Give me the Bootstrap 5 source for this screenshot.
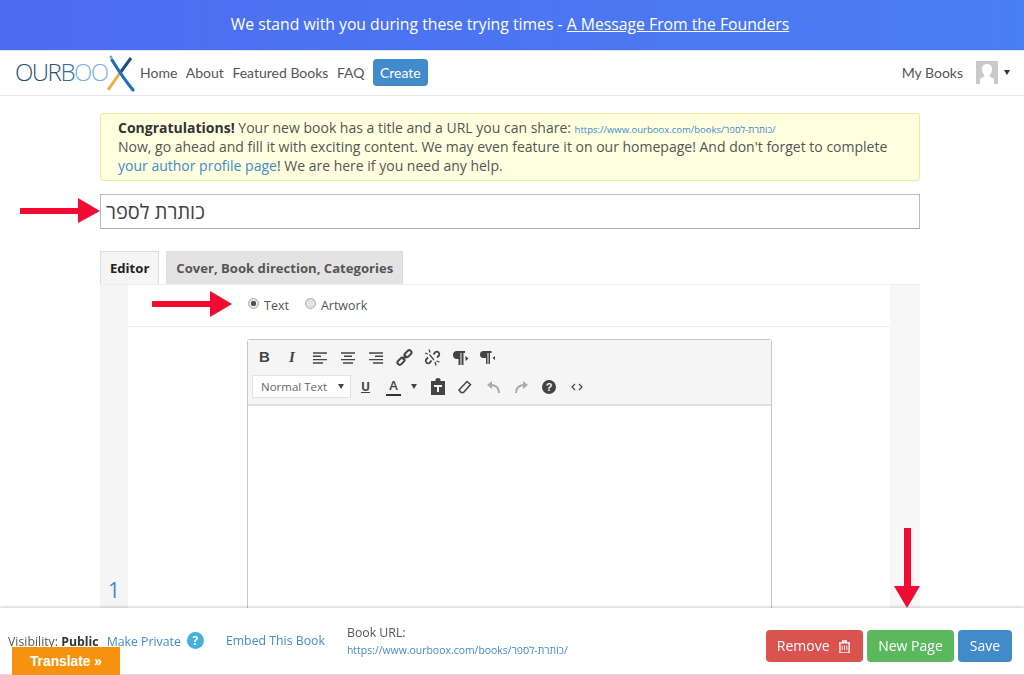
<!DOCTYPE html>
<html lang="en"><head><meta charset="utf-8"><title>Ourboox</title>
<link href="https://cdn.jsdelivr.net/npm/bootstrap@5.3.0/dist/css/bootstrap.min.css" rel="stylesheet">
<style>
html,body{height:675px;overflow:hidden}
body{font-family:"Open Sans","Noto Sans",sans-serif;color:#555;background:#fff;position:relative}
.top-banner{height:51px;background:linear-gradient(90deg,#4d6cf0,#4a7ef5);color:#fff;font-size:15.75px;border-bottom:1px solid #dfe6fb;padding-right:4px}
.top-banner a{color:#fff}
.site-nav{height:45px;border-bottom:1px solid #e7e7e7;padding:0 13px 1px 15px;font-family:Lato,sans-serif;font-size:14px}
.site-nav a{color:#555;text-decoration:none}
.logo-box{width:120px;height:44px;position:relative;margin-right:5px}
.logo-word{position:absolute;left:0;top:4px;font-family:"Open Sans",sans-serif;font-weight:300;font-size:24px;line-height:34px;letter-spacing:-1.5px;color:#1f4e79;white-space:nowrap}
.logo-word u{text-decoration:none;color:#2f6aa8}
.logo-word i{font-style:normal;color:#7fb0e0}
.logo-x{position:absolute;left:92px;top:3px}
.create-btn{background:#428bca;color:#fff!important;border-radius:4px;padding:0 7px;height:27px;line-height:27px}
.page-wrap{width:820px;margin:0 0 0 100px}
.note-box{margin-top:17px;height:68px;background:#ffffdf;border:1px solid #f0e9a0;border-radius:3px;padding:4px 17px;font-size:14px;line-height:19px;color:#555}
.note-box strong{color:#333}
.note-box a{color:#428bca;text-decoration:none}
.note-box .note-url{font-size:9.500px;line-height:1}
.title-field{margin-top:13px;height:35px;border:1px solid #bbb;border-bottom-color:#aaa;padding:0 5px;font-size:20px;line-height:33px;color:#444;font-family:"Noto Sans","Open Sans",sans-serif}
.tab-row{margin-top:22px;height:33px;gap:7px}
.tab-item{height:33px;border:1px solid #ddd;border-bottom:0;padding:0 9px;font-weight:700;font-size:13.100px;line-height:33px;background:#f5f5f5;color:#222}
.tab-off{background:#e3e3e3;color:#555}
.edit-frame{height:340px;border-top:1px solid #eee;background:#fff}
.gut-left{width:28px;background:#f5f5f5;position:relative}
.gut-right{width:30px;background:#f7f7f7}
.page-num{position:absolute;left:8px;top:291px;color:#428bca;font-size:21px;line-height:28px}
.mode-row{height:42px;border-bottom:1px solid #f0f0f0;font-size:12.500px;padding:2px 0 0 120px;color:#555}
.radio-dot{width:11px;height:11px;border-radius:50%;border:1px solid #aaa;background:#e4e4e4;display:inline-block;margin-right:5px;position:relative;top:-3px}
.radio-on{background:radial-gradient(circle,#555 0 2.500px,#e8e8e8 3px)}
.rich-box{margin:12px 0 0 119px;width:525px;height:300px;border:1px solid #c8c8c8;border-radius:3px 3px 0 0}
.rich-tools{height:66px;background:#f5f5f5;border-bottom:2px solid #e0e0e0;padding:3px 3px 0}
.tool-line{height:29px}
.tool-ic{width:29px;height:20px;display:flex;align-items:center;justify-content:center;flex:none}
.tool-sel{width:99px;height:23px;background:#fff;border:1px solid #e3e3e3;font-size:11.500px;color:#666;padding:0 6px 0 8px;margin:0 1px 0 1px}
.caret-mini{border-left:3.500px solid transparent;border-right:3.500px solid transparent;border-top:5px solid #444;display:inline-block}
.bottom-bar{position:fixed;left:0;right:0;top:608px;height:67px;background:#fff;box-shadow:0 -1px 3px rgba(0,0,0,.2);border-bottom:1px solid #ddd;font-size:12.300px;color:#555;padding:0 12px 0 8px}
.bottom-bar a{color:#428bca;text-decoration:none}
.help-dot{width:17px;height:17px;background:#46b0dc;color:#fff;border-radius:50%;font-weight:700;font-size:12px;line-height:17px;text-align:center;display:inline-block;margin-left:6px;position:relative;top:-1px}
.url-small{font-size:10.450px}
.act-btn{height:32px;border-radius:4px;color:#fff;font-size:14px;line-height:32px;text-align:center;border:0;padding:0}
.translate-tag{position:absolute;left:12px;top:39px;width:108px;height:28px;background:#f6920e;color:#fff;font-family:"Liberation Sans",sans-serif;font-weight:700;font-size:13.800px;line-height:29px;text-align:center}
.red-arrow{position:absolute;z-index:5}
.user-pic{width:22px;height:23px;background:#c9c9c9;margin:0 7px 0 13px;overflow:hidden}
</style></head>
<body>
<div class="top-banner d-flex align-items-center justify-content-center"><span>We stand with you during these trying times - <a href="#">A Message From the Founders</a></span></div>
<nav class="site-nav d-flex align-items-center">
  <div class="logo-box"><span class="logo-word">OUR<u>B</u><i>OO</i></span>
    <svg class="logo-x" width="30" height="40" viewBox="0 0 30 40"><circle cx="4" cy="3" r="1.500" fill="#6aa5de"/><path d="M1 36 13 19" stroke="#e9b23f" stroke-width="3" fill="none"/><path d="M13 19 24 4" stroke="#1f4f86" stroke-width="3" fill="none"/><path d="M5 6C10 14 16 24 26 36" stroke="#1d6fc0" stroke-width="3.200" fill="none" stroke-linecap="round"/></svg>
  </div>
  <div class="d-flex align-items-center" style="gap:8.500px"><a href="#">Home</a><a href="#">About</a><a href="#">Featured Books</a><a href="#">FAQ</a><a href="#" class="create-btn">Create</a></div>
  <div class="ms-auto d-flex align-items-center" style="margin-right:1px"><a href="#">My Books</a>
    <div class="user-pic" style="margin-right:6px"><svg class="d-block" width="22" height="23" viewBox="0 0 22 23"><path d="M11 3c4 0 5.500 3 5 6-.3 2.500-1.500 4-2.500 5.500 0 1.500 2.500 2 4.500 3.500v5H4v-5c2-1.500 4.500-2 4.500-3.500C7.500 13 6.300 11.500 6 9c-.5-3 1-6 5-6z" fill="#fff"/></svg></div><span class="caret-mini" style="border-top-color:#333"></span></div>
</nav>
<main class="page-wrap">
  <div class="note-box"><strong>Congratulations!</strong> Your new book has a title and a URL you can share: <a class="note-url" href="#">https://www.ourboox.com/books/כותרת-לספר/</a><br>Now, go ahead and fill it with exciting content. We may even feature it on our homepage! And don't forget to complete<br><a href="#">your author profile page</a>! We are here if you need any help.</div>
  <div class="title-field"><span class="d-block">כותרת לספר</span></div>
  <div class="tab-row d-flex"><div class="tab-item">Editor</div><div class="tab-item tab-off">Cover, Book direction, Categories</div></div>
  <div class="edit-frame d-flex">
    <div class="gut-left"><span class="page-num">1</span></div>
    <div class="flex-grow-1">
      <div class="mode-row d-flex align-items-center"><span class="radio-dot radio-on"></span><span>Text</span><span class="radio-dot ms-3"></span><span>Artwork</span></div>
      <div class="rich-box">
        <div class="rich-tools">
          <div class="tool-line d-flex align-items-center">
            <span class="tool-ic" style="width:27px;font-weight:700;font-size:15px;color:#444;font-family:'Liberation Sans',sans-serif">B</span>
            <span class="tool-ic" style="width:28px;font-style:italic;font-weight:700;font-size:15px;color:#444;font-family:'Liberation Serif',serif">I</span>
            <span class="tool-ic" style="width:28px"><svg width="14" height="12" viewBox="0 0 14 12"><path d="M0 1h14M0 4.300h8M0 7.600h14M0 11h10" stroke="#444" stroke-width="1.400"/></svg></span>
            <span class="tool-ic" style="width:28px"><svg width="14" height="12" viewBox="0 0 14 12"><path d="M0 1h14M3 4.300h8M0 7.600h14M2 11h10" stroke="#444" stroke-width="1.400"/></svg></span>
            <span class="tool-ic" style="width:28px"><svg width="14" height="12" viewBox="0 0 14 12"><path d="M0 1h14M6 4.300h8M0 7.600h14M4 11h10" stroke="#444" stroke-width="1.400"/></svg></span>
            <span class="tool-ic" style="width:28px"><svg width="17" height="17" viewBox="0 0 17 17" fill="none" stroke="#444" stroke-width="2"><rect x="8" y="2.500" width="8" height="4.500" rx="2.200" transform="rotate(-45 12 4.750)"/><rect x="1" y="10" width="8" height="4.500" rx="2.200" transform="rotate(-45 5 12.250)"/><path d="M6.500 10.500l4-4"/></svg></span>
            <span class="tool-ic" style="width:28px"><svg width="17" height="17" viewBox="0 0 17 17" fill="none" stroke="#444" stroke-width="1.800"><path d="M9.500 5.500 11.500 3a2.600 2.600 0 0 1 3.500 3.500L13 8.500"/><path d="M7.500 11.500 5.500 14A2.600 2.600 0 0 1 2 10.500L4 8.500"/><path d="M5.500 5.500 10 11" stroke-width="1.200"/><path d="M5 .5l1 3M1 4l3 1M12.500 12l3 1M11 13l1 3.500" stroke-width="1.300"/></svg></span>
            <span class="tool-ic" style="width:28px"><svg width="17" height="14" viewBox="0 0 17 14"><path d="M5 0h8v2h-1.500v12H9.500V2H8.500v12h-2V8H5a4 4 0 0 1 0-8z" fill="#444"/><path d="M13.500 5l3 2.500-3 2.500z" fill="#444"/></svg></span>
            <span class="tool-ic" style="width:27px"><svg width="15" height="13" viewBox="0 0 15 13"><path d="M3.500 0h8v2H10v11H8.500V2h-1v11H6V7H3.500a3.500 3.500 0 0 1 0-7z" fill="#444"/><path d="M15 5l-2.500 2 2.500 2z" fill="#444"/></svg></span>
          </div>
          <div class="tool-line d-flex align-items-center">
            <div class="tool-sel d-flex align-items-center justify-content-between"><span>Normal Text</span><span class="caret-mini"></span></div>
            <span class="tool-ic" style="width:27px;font-weight:700;font-size:12px;color:#444;text-decoration:underline">U</span>
            <span class="tool-ic" style="width:27px;margin-left:1px;font-weight:600;font-size:13px;color:#444;display:block;text-align:center;line-height:17px"><span style="border-bottom:2px solid #333;padding:0 3px">A</span></span>
            <span class="caret-mini" style="margin-left:4px"></span>
            <span class="tool-ic" style="width:33px;margin-left:4px"><svg width="16" height="17" viewBox="0 0 16 17"><path d="M1 3h4.500V1.500q0-1.500 2.500-1.500t2.500 1.500V3H15v14H1z" fill="#444"/><path d="M4 7h8v2H9v5H7V9H4z" fill="#f5f5f5"/></svg></span>
            <span class="tool-ic" style="width:22px"><svg width="14" height="14" viewBox="0 0 14 14" fill="none" stroke="#444" stroke-width="1.500"><path d="M9 1.500l3.500 3-7 8H3l-2-2.500z"/></svg></span>
            <span class="tool-ic" style="margin-left:2.500px"><svg width="15" height="15" viewBox="0 0 15 15" fill="none" stroke="#aaa" stroke-width="2"><path d="M13 14C13 9 10 6 4 6"/><path d="M1 6l5-4v8z" fill="#aaa" stroke="none"/></svg></span>
            <span class="tool-ic" style="width:27px"><svg width="15" height="15" viewBox="0 0 15 15" fill="none" stroke="#aaa" stroke-width="2"><path d="M2 14C2 9 5 6 11 6"/><path d="M14 6l-5-4v8z" fill="#aaa" stroke="none"/></svg></span>
            <span class="tool-ic" style="width:28px"><svg width="14" height="14" viewBox="0 0 14 14"><circle cx="7" cy="7" r="7" fill="#444"/><text x="7" y="11" text-anchor="middle" font-size="11" font-weight="700" fill="#f5f5f5" font-family="Liberation Sans">?</text></svg></span>
            <span class="tool-ic" style="width:28px"><svg width="12" height="8" viewBox="0 0 12 8" fill="none" stroke="#444" stroke-width="1.200"><path d="M4 1 1 4l3 3M8 1l3 3-3 3"/></svg></span>
          </div>
        </div>
      </div>
    </div>
    <div class="gut-right"></div>
  </div>
</main>
<svg class="red-arrow" style="left:19px;top:197px" width="82" height="28" viewBox="0 0 82 28"><path d="M1 11h58V1l22 13-22 12V17H1z" fill="#f20a32"/></svg>
<svg class="red-arrow" style="left:151px;top:291px" width="82" height="26" viewBox="0 0 82 26"><path d="M1 10h58V0l22 13-22 13V16H1z" fill="#f20a32"/></svg>
<svg class="red-arrow" style="left:893px;top:527px" width="28" height="82" viewBox="0 0 28 82"><path d="M11 1h7v58h9L14 81 1 59h10z" fill="#f20a32"/></svg>
<footer class="bottom-bar d-flex">
  <div style="margin-top:25px">Visibility: <b style="color:#333">Public</b><a href="#" style="margin-left:8px">Make Private</a><span class="help-dot">?</span></div>
  <a href="#" style="margin:24px 0 0 22px">Embed This Book</a>
  <div style="margin:16px 0 0 22px"><div>Book URL:</div><a class="url-small d-block" style="margin-top:1px" href="#">https://www.ourboox.com/books/כותרת-לספר/</a></div>
  <div class="ms-auto d-flex" style="gap:4px;margin-top:22px">
    <button class="act-btn" style="width:97px;background:#d9534f;padding-right:2px">Remove <svg width="11" height="13" viewBox="0 0 12 14" style="vertical-align:-2px;margin-left:6px"><path d="M0 3h12v1H11v10H1V4H0zM4 3V1h4v2" fill="none" stroke="#fff" stroke-width="1.400"/><path d="M3.500 6v5M6 6v5M8.500 6v5" stroke="#fff"/></svg></button>
    <button class="act-btn" style="width:87px;background:#5cb85c">New Page</button>
    <button class="act-btn" style="width:54px;background:#428bca">Save</button>
  </div>
  <div class="translate-tag">Translate »</div>
</footer>
</body></html>
